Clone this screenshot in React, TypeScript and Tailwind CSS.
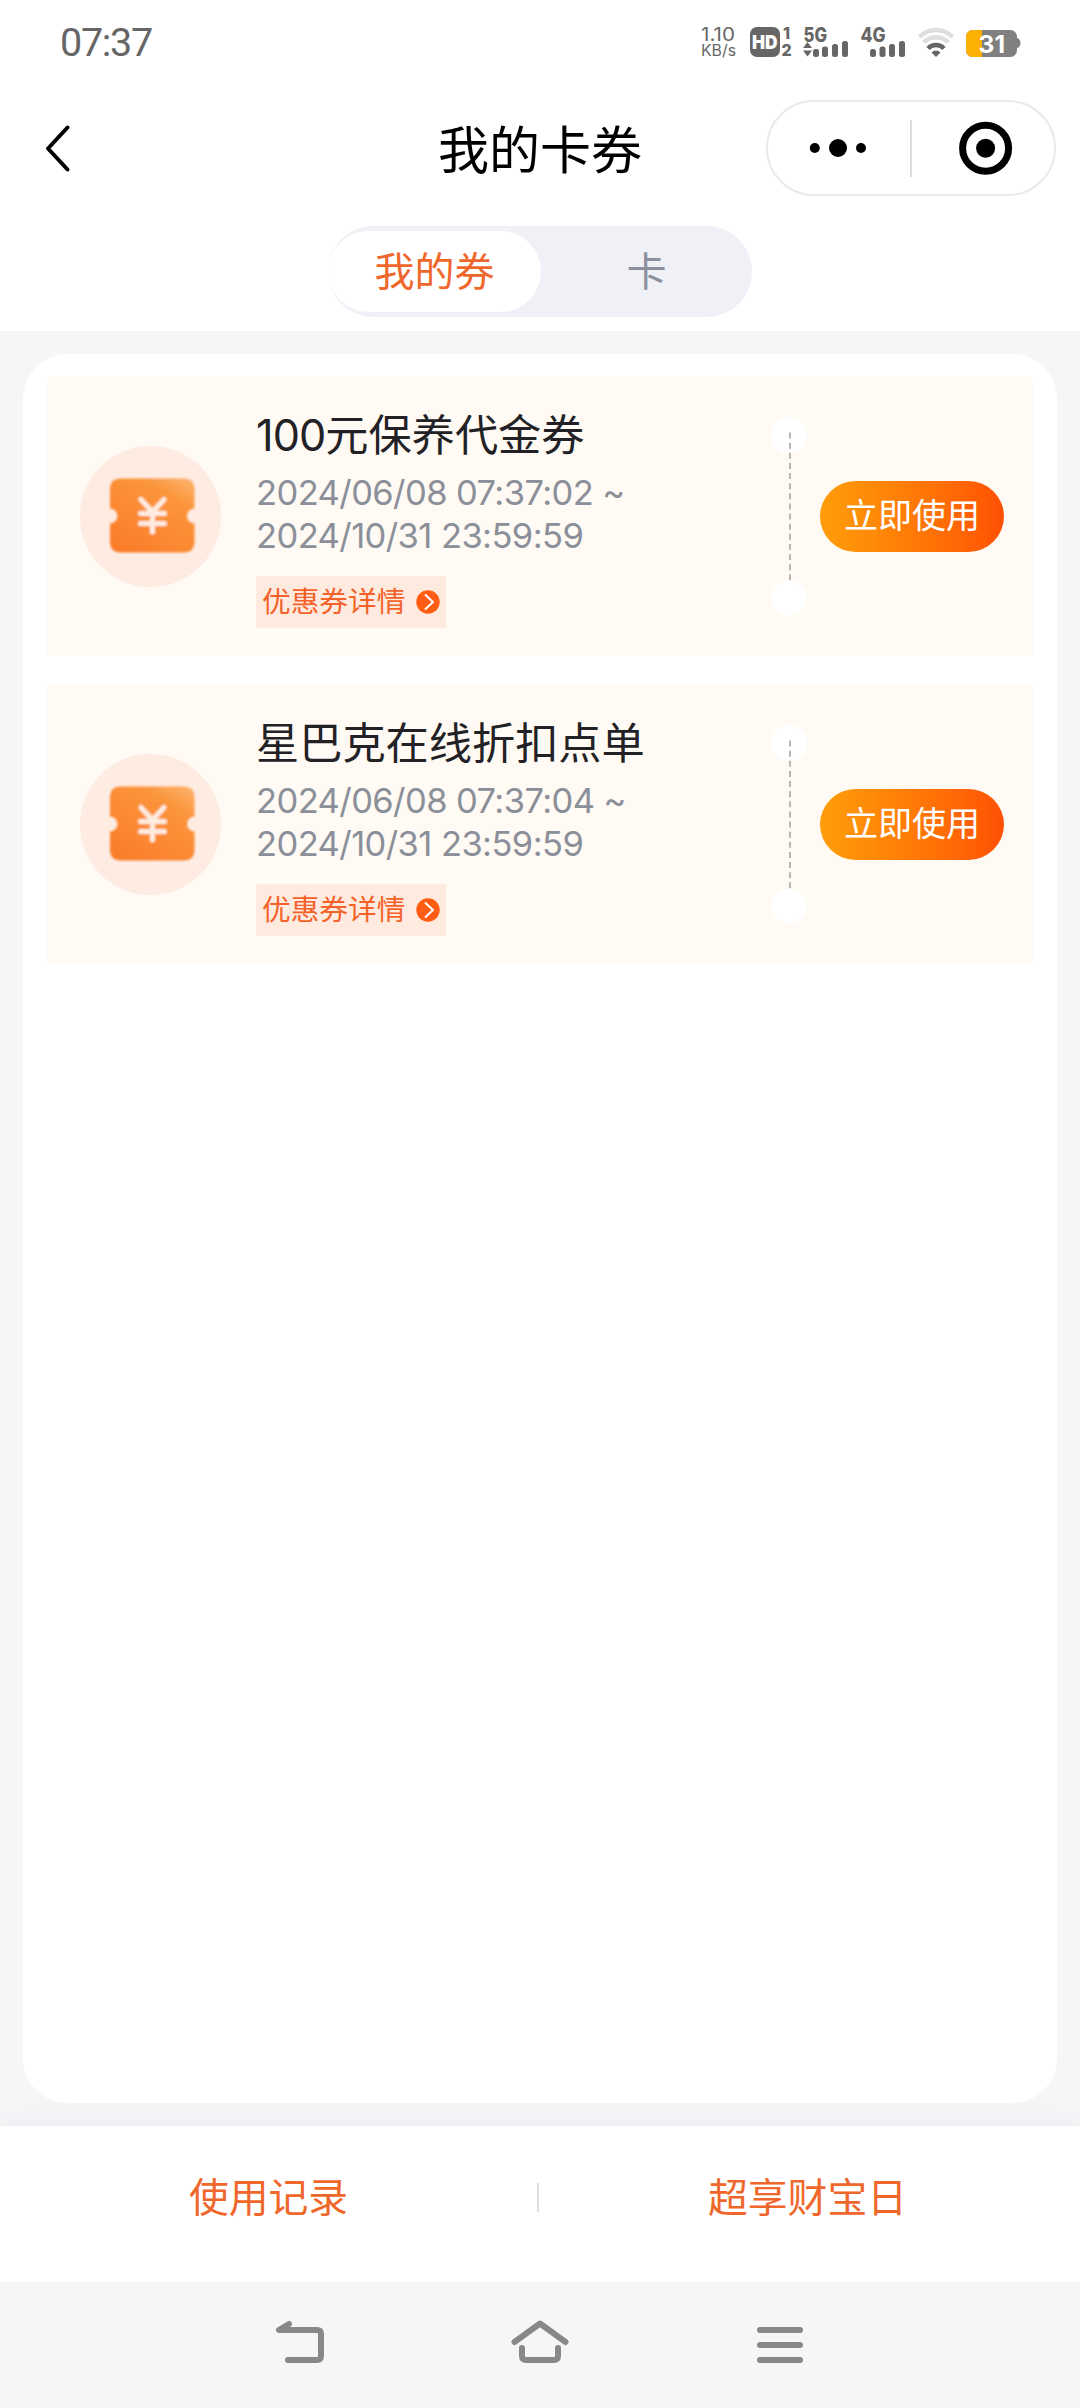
const coupons = [
  { amount: "100", title: "元保养代金券", start: "2024/06/08 07:37:02 ~", end: "2024/10/31 23:59:59" },
  { amount: "", title: "星巴克在线折扣点单", start: "2024/06/08 07:37:04 ~", end: "2024/10/31 23:59:59" },
];

function StatusIcons() {
  return (
    <svg width="360" height="70" viewBox="0 0 360 70" fill="#666" fontFamily="Inter, sans-serif">
      <text x="21" y="31" fontSize="18.5" textLength="34" lengthAdjust="spacingAndGlyphs">1.10</text>
      <text x="21" y="46" fontSize="15.5" textLength="35" lengthAdjust="spacingAndGlyphs">KB/s</text>
      <rect x="70" y="17" width="30" height="30" rx="7" />
      <text x="72" y="39" fontSize="19" fontWeight="900" fill="#fff" textLength="25.5" lengthAdjust="spacingAndGlyphs">HD</text>
      <g fontWeight="800">
        <text x="103" y="29" fontSize="16">1</text>
        <text x="101.5" y="46" fontSize="16">2</text>
        <text x="123.5" y="31.5" fontSize="19.5" textLength="23.5" lengthAdjust="spacingAndGlyphs">5G</text>
        <text x="180.5" y="31.5" fontSize="19.5" textLength="25" lengthAdjust="spacingAndGlyphs">4G</text>
      </g>
      <path d="M127.5 32l4.500 6h-9zM127.500 46.500l4.500-6h-9z" />
      <rect x="133" y="39" width="6" height="8" rx="2.5" />
      <rect x="142" y="36.5" width="6" height="10.5" rx="2.5" />
      <rect x="152" y="34" width="6" height="13" rx="2.5" />
      <rect x="162" y="31" width="6" height="16" rx="2.5" />
      <rect x="190" y="39" width="6" height="8" rx="2.5" />
      <rect x="199.5" y="36.5" width="6" height="10.5" rx="2.5" />
      <rect x="209" y="34" width="6" height="13" rx="2.5" />
      <rect x="219" y="31" width="6" height="16" rx="2.5" />
      <g fill="none" strokeWidth="4.5">
        <path d="M239.500 27A23 23 0 0 1 272.500 27" stroke="#ddd" />
        <path d="M243.800 32.500A17 17 0 0 1 268.200 32.500" stroke="#ddd" />
        <path d="M248 38.500A11 11 0 0 1 264 38.500" stroke="#666" />
      </g>
      <path d="M256 47l-4.500-4.500a6 6 0 0 1 9 0z" />
      <path d="M336 27.500q4.500 1 4.500 5.500t-4.500 5.500z" fill="#808080" />
      <rect x="286" y="20" width="51" height="27" rx="6.500" fill="#808080" />
      <path d="M292.500 20H302v27h-9.500a6.500 6.500 0 0 1-6.500-6.500V26.500a6.500 6.500 0 0 1 6.500-6.500z" fill="#fbb003" />
      <text x="298.500" y="42.500" fontSize="24" fontWeight="700" fill="#fff" textLength="26.500" lengthAdjust="spacingAndGlyphs">31</text>
    </svg>
  );
}

function TicketIcon() {
  return (
    <svg className="h-[141px] w-[141px] shrink-0" viewBox="0 0 141 141">
      <defs>
        <linearGradient id="ticket" x1="0.9" y1="0" x2="0.2" y2="1">
          <stop offset="0" stopColor="#fdb06a" />
          <stop offset="0.25" stopColor="#fb953b" />
          <stop offset="1" stopColor="#fa7d2b" />
        </linearGradient>
        <filter id="soft" x="-10%" y="-10%" width="120%" height="120%">
          <feGaussianBlur stdDeviation="1" />
        </filter>
      </defs>
      <circle cx="70.5" cy="70.5" r="70.5" fill="#feebe2" />
      <g filter="url(#soft)">
        <path
          d="M41 32.5H103.5Q114.5 32.5 114.5 43.5V62.5A7.500 7.500 0 0 0 114.500 77.500V95.500Q114.500 106.500 103.500 106.500H41Q30 106.500 30 95.500V77.500A7.500 7.500 0 0 0 30 62.500V43.500Q30 32.500 41 32.500Z"
          fill="url(#ticket)"
        />
        <path
          d="M61 53.500L72.500 66L84 53.500M60.500 67.500H84.500M60.500 77.500H84.500M72.500 66V86"
          fill="none"
          stroke="#ffece0"
          strokeWidth="5"
          strokeLinecap="round"
        />
      </g>
    </svg>
  );
}

function Coupon({ amount, title, start, end }: (typeof coupons)[number]) {
  return (
    <article className="flex h-[279px] items-center bg-[#fffaf3] pl-[33px] pr-[29px]">
      <TicketIcon />
      <div className="ml-[35px] flex h-full flex-1 flex-col items-start pt-[28px]">
        <h2 className="h-[60px] whitespace-nowrap text-[43.2px] leading-[60px] text-[#222226]">
          {amount && <span className="tracking-[-0.9px]">{amount}</span>}
          {title}
        </h2>
        <p className="mt-[6px] whitespace-nowrap text-[34.5px] leading-[43px] tracking-[-0.58px] text-[#8b8f99]">
          {start}
          <br />
          {end}
        </p>
        <button className="mt-[19px] flex h-[52px] w-[190px] items-center rounded-[2px] bg-[#feeadf] pl-[6px] text-[28.7px] leading-none text-[#f4622a]">
          <span className="whitespace-nowrap">优惠券详情</span>
          <svg className="ml-[11px] shrink-0" width="24" height="24" viewBox="0 0 24 24">
            <circle cx="12" cy="12" r="11.7" fill="#ff5d14" />
            <path d="M9 4.5L17 12L9 19.5" fill="none" stroke="#fff" strokeWidth="2" />
          </svg>
        </button>
      </div>
      <svg className="mr-[13px] shrink-0" width="36" height="200" viewBox="0 0 36 200">
        <circle cx="18" cy="18" r="18" fill="#fff" />
        <circle cx="18" cy="181" r="17.5" fill="#fff" />
        <path d="M19 15.5V164" stroke="#b9b5b3" strokeWidth="2" strokeDasharray="6 4.13" />
      </svg>
      <button className="flex h-[71px] w-[184px] shrink-0 items-center justify-center rounded-full bg-linear-to-r from-[#ff9d0a] to-[#ff5004] pb-[2px] text-[34px] leading-none text-white">
        立即使用
      </button>
    </article>
  );
}

export default function App() {
  return (
    <div className="flex h-[2408px] w-[1080px] flex-col overflow-hidden bg-[#f6f6f9] font-[Inter,'Noto_Sans_CJK_SC',sans-serif]">
      <div className="h-[331px] bg-white">
        <div className="flex h-[84px] items-start justify-between pl-[60px] pr-[40px]">
          <span className="mt-[23px] font-[Roboto,sans-serif] text-[39.5px] leading-[40px] tracking-[-1.3px] text-[#666]">07:37</span>
          <div className="mt-[10px] h-[70px]">
            <StatusIcons />
          </div>
        </div>
        <header className="grid h-[128px] grid-cols-[1fr_auto_1fr] items-center pr-[24px] pl-[24px]">
          <svg className="ml-[20px]" width="30" height="50" viewBox="0 0 30 50" fill="none" stroke="#000" strokeWidth="4" strokeLinecap="round" strokeLinejoin="round">
            <path d="M23.5 4.5L4 25.5L23.5 46.5" />
          </svg>
          <h1 className="whitespace-nowrap pt-[5px] text-[51px] leading-[60px] text-black">我的卡券</h1>
          <div className="flex h-[96px] w-[290px] items-center justify-self-end rounded-full border-2 border-[#e9e9e9]">
            <svg width="286" height="92" viewBox="0 0 286 92">
              <circle cx="46.8" cy="46" r="5" />
              <circle cx="70" cy="46" r="9" />
              <circle cx="93" cy="46" r="5" />
              <rect x="142" y="18" width="2" height="57" fill="#dcdcdc" />
              <circle cx="217.6" cy="46.3" r="23" fill="none" stroke="#000" strokeWidth="7" />
              <circle cx="217.6" cy="46.3" r="9.5" />
            </svg>
          </div>
        </header>
        <div className="mx-auto mt-[14px] flex h-[91px] w-[424px] items-center rounded-full bg-[#eff1f7] text-[40px] leading-none">
          <div className="flex h-[81px] w-[213px] items-center justify-center rounded-full bg-white text-[#f0672c]">我的券</div>
          <div className="flex flex-1 items-center justify-center text-[#8b909c]">卡</div>
        </div>
      </div>

      <main className="mx-[23px] mt-[23px] flex h-[1749px] flex-col gap-[29px] rounded-[45px] bg-white px-[24px] pt-[23px]">
        {coupons.map((c) => (
          <Coupon key={c.title} {...c} />
        ))}
      </main>

      <footer className="mt-[23px] flex h-[156px] items-center bg-white pb-[13px] text-[39.8px] leading-none text-[#f0672c] shadow-[0_-2px_24px_rgba(60,60,90,0.06)]">
        <span className="flex-1 text-center">使用记录</span>
        <span className="h-[29px] w-[2px] bg-[#dedee2]" />
        <span className="flex-1 pr-[4px] text-center">超享财宝日</span>
      </footer>

      <nav className="flex h-[126px] items-start justify-center gap-[180px] bg-[#f6f6f6] pt-[33px]">
        <svg width="60" height="60" viewBox="0 0 60 60" fill="none" stroke="#888" strokeWidth="6" strokeLinecap="round" strokeLinejoin="round">
          <path d="M19 9L9 15H47Q51 15 51 19V41Q51 45 47 45H18" />
        </svg>
        <svg width="60" height="60" viewBox="0 0 60 60" fill="none" stroke="#888" strokeWidth="6" strokeLinecap="round" strokeLinejoin="round">
          <path d="M4.500 27L30 8.500L55.500 27M12 33V41Q12 45 16 45H44Q48 45 48 41V33" />
        </svg>
        <svg width="60" height="60" viewBox="0 0 60 60" fill="none" stroke="#888" strokeWidth="6" strokeLinecap="round">
          <path d="M10 15H50M10 30H50M10 45H50" />
        </svg>
      </nav>
    </div>
  );
}
